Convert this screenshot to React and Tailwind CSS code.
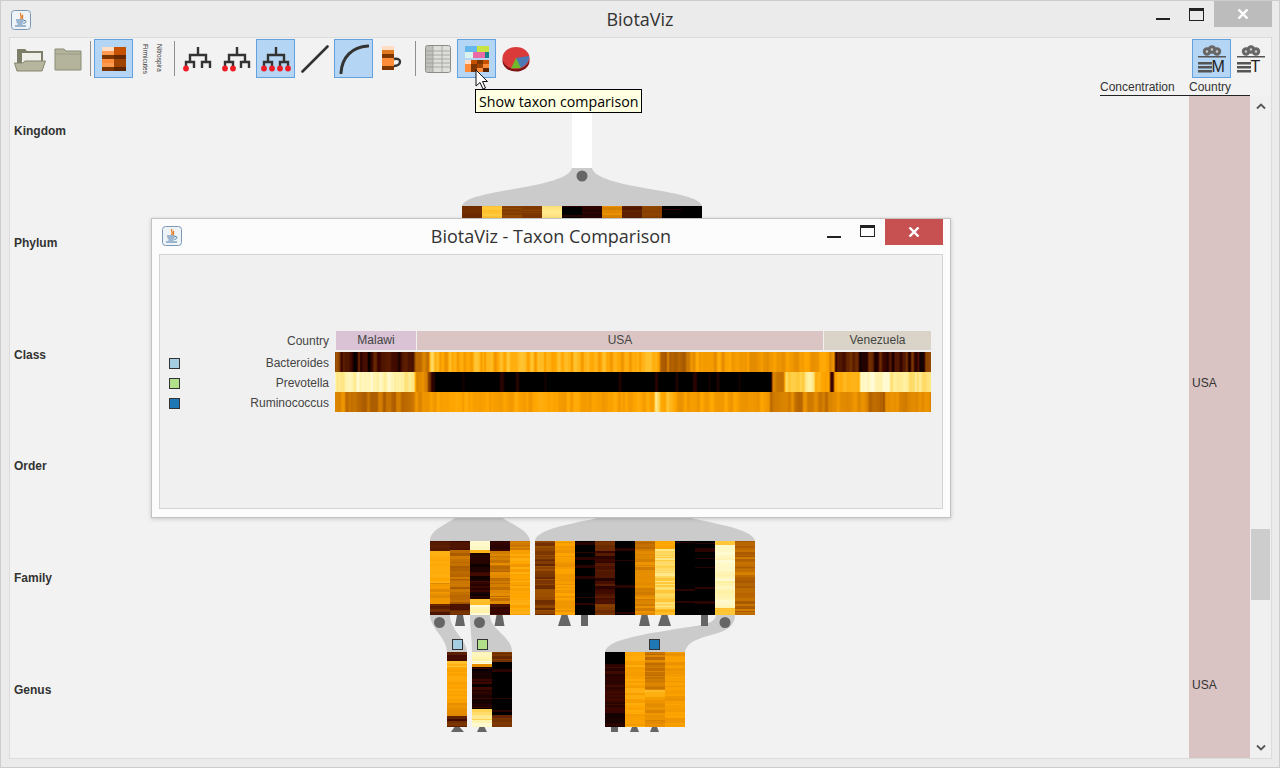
import React from 'react';

const STOPS = [
  [0, [0, 0, 0]],
  [0.1, [58, 5, 0]],
  [0.25, [122, 53, 0]],
  [0.4, [176, 96, 0]],
  [0.5, [226, 138, 0]],
  [0.6, [255, 165, 0]],
  [0.75, [255, 204, 64]],
  [0.9, [255, 240, 160]],
  [1, [255, 253, 224]],
];

function heat(v) {
  const t = Math.max(0, Math.min(1, v));
  for (let i = 1; i < STOPS.length; i++) {
    if (t <= STOPS[i][0]) {
      const [a, ca] = STOPS[i - 1];
      const [b, cb] = STOPS[i];
      const k = (t - a) / (b - a);
      return `rgb(${ca.map((c, n) => Math.round(c + (cb[n] - c) * k)).join(',')})`;
    }
  }
  return 'rgb(255,253,224)';
}

function rng(seed) {
  let s = seed;
  return () => {
    s = (s * 16807) % 2147483647;
    return (s - 1) / 2147483646;
  };
}

// black areas stay black with a dark red line now and then
function level(seg, r) {
  if (seg[1] <= 0.03) return r() < 0.1 ? 0.07 : 0;
  return seg[1] + (r() - 0.5) * seg[2] * 2;
}

// one heatmap column: horizontal stripes, segs are [end fraction, level, jitter]
function Column({ x, y, w, h, segs, seed }) {
  const r = rng(seed);
  const rects = [];
  let py = 0;
  while (py < h) {
    const f = py / h;
    const found = segs.find((s) => f < s[0]) || segs[segs.length - 1];
    const seg = [found[0], found[1], found[2] ?? 0.03];
    const rh = Math.min(1 + Math.floor(r() * 3), h - py);
    rects.push(<rect key={py} x={x} y={y + py} width={w} height={rh} fill={heat(level(seg, r))} />);
    py += rh;
  }
  return <g>{rects}</g>;
}

const TOP_COLS = [0.22, 0.72, 0.3, 0.28, 0.85, 0.02, 0.06, 0.5, 0.17, 0.3, 0.02, 0];

const FAMILY_A = [
  [[0.12, 0.15], [0.2, 0.68, 0.1], [0.55, 0.62, 0.02], [0.85, 0.52, 0.05], [1, 0.2, 0.06]],
  [[0.12, 0.13], [0.7, 0.43, 0.05], [0.85, 0.38, 0.06], [1, 0.18, 0.08]],
  [[0.12, 0.95, 0.04], [0.16, 0.6, 0.1], [0.75, 0.07, 0.05], [0.85, 0.75, 0.07], [1, 0.95, 0.04]],
  [[0.12, 0.08], [0.85, 0.46, 0.06], [1, 0.1, 0.05]],
  [[0.1, 0.47], [1, 0.6, 0.05]],
];
const FAMILY_B = [
  [[1, 0.28, 0.08]],
  [[1, 0.56, 0.04]],
  [[1, 0, 0]],
  [[0.1, 0.22], [0.85, 0.12, 0.06], [1, 0.25, 0.04]],
  [[1, 0.02, 0]],
  [[0.1, 0.42], [1, 0.5, 0.04]],
  [[0.1, 0.62], [0.9, 0.8, 0.08], [1, 0.66]],
  [[1, 0, 0]],
  [[1, 0, 0]],
  [[0.05, 0.72], [0.7, 0.94, 0.05], [0.9, 0.95, 0.04], [1, 0.72]],
  [[1, 0.42, 0.06]],
];

const GENUS = [
  { x: 447, segs: [[0.12, 0.15, 0.05], [0.2, 0.68, 0.1], [0.65, 0.6, 0.02], [0.85, 0.52, 0.04], [1, 0.18, 0.07]] },
  { x: 472, segs: [[0.15, 0.95, 0.05], [0.18, 0.5], [0.75, 0.06, 0.05], [0.9, 0.8, 0.08], [1, 0.95, 0.04]] },
  { x: 492, segs: [[0.12, 0.25, 0.05], [0.82, 0, 0], [1, 0.25, 0.05]] },
  { x: 605, segs: [[0.13, 0, 0], [0.8, 0.09, 0.03], [1, 0.05, 0.03]] },
  { x: 625, segs: [[1, 0.6, 0.04]] },
  { x: 645, segs: [[0.5, 0.47, 0.05], [0.6, 0.68, 0.06], [1, 0.52, 0.05]] },
  { x: 665, segs: [[1, 0.56, 0.04]] },
];

const Dot = ({ x, y }) => <circle cx={x} cy={y} r={5.5} fill="#666666" />;
const Tri = ({ x, y, w = 13, h = 11 }) => (
  <polygon points={`${x - w / 2},${y + h} ${x + w / 2},${y + h} ${x + 3},${y} ${x - 3},${y}`} fill="#666666" />
);
const Bar = ({ x, y, h = 11 }) => <rect x={x} y={y} width={7} height={h} fill="#666666" />;
const Mark = ({ x, y, fill }) => <rect x={x + 0.5} y={y + 0.5} width={10} height={10} fill={fill} stroke="#333333" />;

function TreeCanvas() {
  return (
    <svg className="absolute top-0 left-0" width="1180" height="679" viewBox="10 80 1180 679">
      <rect x="572" y="96" width="20" height="73" fill="#ffffff" />
      <path d="M572 168 L592 168 C594 178 620 184 650 189 C680 194 700 198 702 206 L462 206 C464 198 484 194 514 189 C544 184 570 178 572 168 Z" fill="#cbcbcb" />
      <Dot x={582} y={176} />
      {TOP_COLS.map((v, i) => (
        <Column key={i} x={462 + i * 20} y={206} w={20} h={14} segs={[[1, v, 0.03]]} seed={300 + i * 7} />
      ))}

      <path d="M430 541 C430 530 445 525 460 515 L498 515 C512 525 529 530 530 541 Z" fill="#cbcbcb" />
      <path d="M535 541 C537 526 590 522 607 515 L680 515 C700 522 753 527 755 541 Z" fill="#cbcbcb" />
      {FAMILY_A.map((segs, i) => (
        <Column key={i} x={430 + i * 20} y={541} w={20} h={74} segs={segs} seed={41 + i * 13} />
      ))}
      {FAMILY_B.map((segs, i) => (
        <Column key={i} x={535 + i * 20} y={541} w={20} h={74} segs={segs} seed={97 + i * 17} />
      ))}

      <path d="M430 615 C430 628 447 638 447 652 L467 652 C467 640 450 630 450 615 Z" fill="#cbcbcb" />
      <path d="M470 615 C470 628 472 640 472 652 L512 652 C512 636 490 630 490 615 Z" fill="#cbcbcb" />
      <path d="M605 652 C607 640 640 635 670 630 C700 625 715 625 716 615 L735 615 C735 625 728 630 718 633 C705 637 687 640 685 652 Z" fill="#cbcbcb" />

      <Dot x={439.5} y={622.5} />
      <Tri x={460} y={615} w={10} />
      <Dot x={479.5} y={622.5} />
      <Tri x={499.5} y={615} w={10} />
      <Tri x={564.5} y={615} />
      <Bar x={581} y={615} />
      <Tri x={644.5} y={615} w={11} />
      <Tri x={664.5} y={615} />
      <Bar x={701} y={615} />
      <Dot x={725} y={622.5} />

      <Mark x={452} y={639} fill="#a6cee3" />
      <Mark x={477} y={639} fill="#b2df8a" />
      <Mark x={649} y={639} fill="#1f78b4" />

      {GENUS.map((c, i) => (
        <Column key={i} x={c.x} y={652} w={20} h={75} segs={c.segs} seed={211 + i * 19} />
      ))}

      <polygon points="451,732 464,732 459.5,727 454.5,727" fill="#666666" />
      <polygon points="477,732 487,732 484.5,727 479.5,727" fill="#666666" />
      <rect x="611" y="727" width="7" height="5" fill="#666666" />
      <polygon points="630,732 639,732 637,727 632,727" fill="#666666" />
      <polygon points="650,732 659,732 657,727 652,727" fill="#666666" />
    </svg>
  );
}

// vertical stripes of the comparison view: segs are [end x, level, jitter]
function StripeRow({ y, segs, seed }) {
  const r = rng(seed);
  const values = [];
  let x = 335;
  while (x < 931) {
    const seg = segs.find((s) => x < s[0]) || segs[segs.length - 1];
    const w = Math.min(1 + Math.floor(r() * 4), Math.max(seg[0] - x, 1));
    const v = level(seg, r);
    for (let i = 0; i < w; i++) values.push(v);
    x += w;
  }
  // light smoothing, the original was scaled down from a wider image
  return (
    <g>
      {values.map((v, i) => {
        const prev = values[i - 1] ?? v;
        const next = values[i + 1] ?? v;
        return <rect key={i} x={335 + i} y={y} width={1.4} height={20} fill={heat((prev + v * 2 + next) / 4)} />;
      })}
    </g>
  );
}

const BACTEROIDES = [
  [340, 0.32, 0.05], [415, 0.11, 0.14], [430, 0.47, 0.05], [434, 0.8, 0.05], [660, 0.63, 0.1],
  [690, 0.42, 0.08], [780, 0.56, 0.08], [835, 0.55, 0.08], [925, 0.13, 0.13], [931, 0.3, 0.05],
];
const PREVOTELLA = [
  [415, 0.9, 0.09], [428, 0.5, 0.05], [431, 0.28, 0.1], [772, 0.02, 0], [785, 0.48, 0.05],
  [815, 0.82, 0.1], [830, 0.6, 0.06], [834, 0.08, 0.05], [860, 0.64, 0.06], [890, 0.96, 0.04], [931, 0.85, 0.07],
];
const RUMINOCOCCUS = [
  [345, 0.5, 0.05], [415, 0.43, 0.05], [430, 0.52, 0.05], [655, 0.59, 0.05], [660, 0.88, 0.1],
  [672, 0.66, 0.12], [770, 0.57, 0.05], [830, 0.47, 0.06], [868, 0.52, 0.04], [885, 0.4, 0.05], [931, 0.5, 0.04],
];

function ComparisonStrip() {
  return (
    <svg className="absolute top-0 left-0" width="596" height="60" viewBox="335 352 596 60">
      <StripeRow y={352} segs={BACTEROIDES} seed={1234} />
      <StripeRow y={372} segs={PREVOTELLA} seed={5678} />
      <StripeRow y={392} segs={RUMINOCOCCUS} seed={9012} />
    </svg>
  );
}

function JavaIcon() {
  return (
    <svg width="20" height="20" viewBox="0 0 20 20">
      <rect x="0.5" y="0.5" width="19" height="19" rx="3" fill="#eef3f8" stroke="#7b98b5" />
      <path d="M10 3 C8 5 12 6 9.5 9 M12 5 C10.5 6.5 12.5 7 11 9" stroke="#e8791c" strokeWidth="1.3" fill="none" />
      <path d="M5 10 H13 M5.5 12 H12.5 M6.5 14 H11.5" stroke="#4b7aa6" strokeWidth="1.1" />
      <path d="M13 10.5 C16 10 15.5 13 12.5 13.5 M4 16 H15" stroke="#4b7aa6" strokeWidth="1" fill="none" />
    </svg>
  );
}

function CloseX() {
  return (
    <svg width="12" height="10" viewBox="0 0 12 10">
      <path d="M1.5 0.5 L10.5 9.5 M10.5 0.5 L1.5 9.5" stroke="#ffffff" strokeWidth="2.4" />
    </svg>
  );
}

const Sep = ({ className = 'mr-[3px]' }) => <div className={`w-px h-[35px] bg-[#8f8f8f] ml-[3px] mt-[2px] shrink-0 ${className}`} />;

const ToolBtn = ({ active, children }) => (
  <div className={`w-[39px] h-[39px] flex items-center justify-center shrink-0 border ${active ? 'bg-[#b5d5f4] border-[#63a0e0]' : 'border-transparent'}`}>
    {children}
  </div>
);

function FolderOpen() {
  return (
    <svg width="32" height="26" viewBox="0 0 32 26">
      <path d="M3 3 H11 L13 5 H29 V20 H3 Z" fill="#7d7d68" />
      <rect x="8" y="7" width="19" height="12" fill="#f0f0ea" />
      <path d="M0.5 17 H9 L11 15 H31.5 L28 25 H3 Z" fill="#b6b69e" stroke="#85856f" />
    </svg>
  );
}

function FolderClosed() {
  return (
    <svg width="28" height="24" viewBox="0 0 28 24">
      <path d="M1 2 H10 L12 4 H27 V23 H1 Z" fill="#b4b49c" stroke="#8c8c78" />
      <path d="M1 7 H27" stroke="#9a9a84" />
    </svg>
  );
}

function HeatIcon() {
  return (
    <svg width="24" height="24" viewBox="0 0 24 24">
      {[['#ffdcc4', '#c45000'], ['#ff9a50', '#c45000'], ['#7d3500', '#662800'], ['#ff8c38', '#9e4400'], ['#ff9a50', '#9e4400'], ['#7d3500', '#5e2600']].map((c, i) => (
        <g key={i}>
          <rect x="0" y={i * 4} width="12" height="4" fill={c[0]} />
          <rect x="12" y={i * 4} width="12" height="4" fill={c[1]} />
        </g>
      ))}
    </svg>
  );
}

function TreeIcon({ dots }) {
  return (
    <svg width="30" height="26" viewBox="0 0 30 26">
      <path d="M15 1 V9 M7 16 V9 H23 V16 M3 22 V16 H11 V22 M19 22 V16 H27 V22" fill="none" stroke="#333333" strokeWidth="2.4" />
      {dots.map((x) => (
        <circle key={x} cx={x} cy="22.5" r="2.9" fill="#ee1c25" />
      ))}
    </svg>
  );
}

function TableIcon() {
  return (
    <svg width="26" height="28" viewBox="0 0 26 28">
      <rect x="0.5" y="0.5" width="25" height="27" rx="2" fill="#dededa" stroke="#8d8d88" />
      <path d="M8 1 V27 M17 1 V27 M1 6 H25 M1 10 H25 M1 14 H25 M1 18 H25 M1 22 H25" stroke="#a8a8a4" />
      <rect x="1" y="1" width="7" height="26" fill="#9a9a94" opacity="0.45" />
    </svg>
  );
}

function CompareIcon() {
  const low = ['#ffdcc4', '#c45000', '#7d3500', '#c45000', '#ff8c38', '#7d3500', '#9e4400', '#ff8c38', '#ff8c38', '#7d3500', '#ff8c38', '#5e2600'];
  return (
    <svg width="24" height="26" viewBox="0 0 24 26">
      <rect x="0" y="0" width="12" height="6" fill="#65b7ec" />
      <rect x="12" y="0" width="12" height="6" fill="#c7e33f" />
      <rect x="0" y="6" width="8" height="6" fill="#d8f4ec" />
      <rect x="8" y="6" width="12" height="6" fill="#e96aa6" />
      <rect x="20" y="6" width="4" height="6" fill="#17808a" />
      {low.map((c, i) => (
        <rect key={i} x={(i % 4) * 6} y={14 + Math.floor(i / 4) * 4} width="6" height="4" fill={c} />
      ))}
    </svg>
  );
}

function PieIcon() {
  return (
    <svg width="28" height="27" viewBox="0 0 28 27">
      <ellipse cx="14" cy="16" rx="13.5" ry="10.5" fill="#7e1414" />
      <ellipse cx="14" cy="13" rx="13.5" ry="11" fill="#db3a3a" />
      <path d="M14 13 L27 11 C28 17 22 22 17 23.5 Z" fill="#4d79b5" />
      <path d="M14 13 L19 23 L9 23.5 Z" fill="#6dbb2c" />
    </svg>
  );
}

function CurveIcon() {
  return (
    <svg width="30" height="30" viewBox="0 0 30 30">
      <path d="M2 29 C3 13 13 3 29 2" fill="none" stroke="#333333" strokeWidth="3" strokeLinecap="round" />
    </svg>
  );
}

function LoopIcon() {
  return (
    <svg width="22" height="26" viewBox="0 0 22 26">
      {['#ffdcc4', '#e07820', '#7d3500', '#ff8c38', '#ff8c38', '#7d3500'].map((c, i) => (
        <rect key={i} x="0" y={i * 4} width="12" height="4" fill={c} />
      ))}
      <path d="M12 13 C20 11 20 20 12 20" fill="none" stroke="#333333" strokeWidth="2.4" />
    </svg>
  );
}

function ArcGlyph({ letter }) {
  return (
    <div className="relative w-[30px] h-[30px]">
      <svg className="absolute top-0 left-0" width="30" height="30" viewBox="0 0 30 30">
        {[[10, 7.5], [15, 5.5], [20, 7.5]].map(([cx, cy]) => (
          <g key={cx}>
            <circle cx={cx} cy={cy} r="4.2" fill="#666666" />
            <circle cx={cx} cy={cy} r="1.3" fill="#c8c8c8" />
          </g>
        ))}
        <rect x="1" y="12" width="28" height="1.5" fill="#555555" />
        <rect x="1" y="18" width="14" height="2.5" fill="#555555" />
        <rect x="1" y="22" width="14" height="2.5" fill="#555555" />
        <rect x="1" y="26" width="14" height="2.5" fill="#555555" />
      </svg>
      <span className="absolute left-[15px] top-[15px] text-[16px] leading-[16px] text-[#222222]">{letter}</span>
    </div>
  );
}

function Chevron({ down }) {
  return (
    <svg width="10" height="7" viewBox="0 0 10 7">
      <path d={down ? 'M1 1.5 L5 5.5 L9 1.5' : 'M1 5.5 L5 1.5 L9 5.5'} fill="none" stroke="#555555" strokeWidth="1.8" />
    </svg>
  );
}

function Toolbar() {
  return (
    <div className="h-[42px] pt-[1px] pr-[1px] flex items-start shrink-0">
      <div className="w-[39px] h-[39px] flex items-center justify-center"><FolderOpen /></div>
      <div className="w-[38px] h-[39px] flex items-center justify-center"><FolderClosed /></div>
      <Sep />
      <ToolBtn active><HeatIcon /></ToolBtn>
      <div className="w-[38px] h-[39px] flex items-start gap-[7px] pt-[5px] pl-[9px] text-[6.5px] leading-[7px] text-[#333333]">
        <span className="[writing-mode:vertical-rl]">Firmicutes</span>
        <span className="[writing-mode:vertical-rl]">Nitrospira</span>
      </div>
      <Sep />
      <ToolBtn><TreeIcon dots={[3]} /></ToolBtn>
      <ToolBtn><TreeIcon dots={[3, 11]} /></ToolBtn>
      <ToolBtn active><TreeIcon dots={[3, 11, 19, 27]} /></ToolBtn>
      <ToolBtn>
        <svg width="28" height="28" viewBox="0 0 28 28"><path d="M1.5 26.5 L26.5 1.5" stroke="#333333" strokeWidth="2.6" strokeLinecap="round" /></svg>
      </ToolBtn>
      <ToolBtn active><CurveIcon /></ToolBtn>
      <ToolBtn><LoopIcon /></ToolBtn>
      <Sep className="mr-[2px]" />
      <ToolBtn><TableIcon /></ToolBtn>
      <ToolBtn active><CompareIcon /></ToolBtn>
      <ToolBtn><PieIcon /></ToolBtn>
      <div className="flex-1" />
      <ToolBtn active><ArcGlyph letter="M" /></ToolBtn>
      <ToolBtn><ArcGlyph letter="T" /></ToolBtn>
    </div>
  );
}

function LevelLabels() {
  return (
    <div className="flex flex-col gap-[97.8px] pt-[44px] pl-[4px] font-bold text-[12px] leading-[14px] text-[#333333]">
      {['Kingdom', 'Phylum', 'Class', 'Order', 'Family', 'Genus'].map((l) => (
        <div key={l}>{l}</div>
      ))}
    </div>
  );
}

function RightPanel() {
  return (
    <div className="absolute top-0 right-0 bottom-0 w-[171px] flex flex-col text-[12px] text-[#333333]">
      <div className="h-[16px] w-[150px] border-b border-[#222222] flex leading-[14px]">
        <span className="w-[89px]">Concentration</span>
        <span>Country</span>
      </div>
      <div className="flex flex-1 min-h-0">
        <div className="w-[89px]" />
        <div className="w-[61px] bg-[#d9c3c3] pl-[3px] pt-[280px] flex flex-col gap-[288px] leading-[14px]">
          <span>USA</span>
          <span>USA</span>
        </div>
        <div className="w-[21px] pl-[1px] pr-px flex flex-col items-center bg-[#f0f0f0]">
          <div className="h-[20px] flex items-center"><Chevron /></div>
          <div className="h-[413px] shrink-0" />
          <div className="h-[71px] w-full bg-[#cdcdcd] shrink-0" />
          <div className="flex-1" />
          <div className="h-[22px] flex items-center"><Chevron down /></div>
        </div>
      </div>
    </div>
  );
}

function ComparisonWindow() {
  return (
    <div className="absolute left-[150px] top-[217px] w-[800px] h-[300px] bg-[#fcfcfc] border border-[#c2c2c2] shadow-[0_1px_4px_rgba(0,0,0,0.18)] flex flex-col px-[7px] pb-[8px]">
      <div className="h-[35px] flex items-start relative shrink-0">
        <div className="mt-[7px] ml-[3px]"><JavaIcon /></div>
        <div className="absolute inset-x-0 top-[5px] text-center text-[18px] leading-[24px] text-[#333333] font-['Open_Sans',sans-serif]">BiotaViz - Taxon Comparison</div>
        <div className="ml-auto flex items-start relative">
          <div className="w-[14px] h-[2px] bg-[#222222] mt-[17px] mr-[19px]" />
          <div className="w-[15px] h-[12px] border border-[#222222] border-t-[3px] mt-[6px] mr-[10px]" />
          <div className="w-[58px] h-[26px] bg-[#c75050] flex items-center justify-center"><CloseX /></div>
        </div>
      </div>
      <div className="flex-1 bg-[#f0f0f0] border border-[#d3d3d3] pt-[76px] text-[12px] text-[#444444] leading-[20px]">
        <div className="flex h-[20px]">
          <div className="w-[169px] text-right">Country</div>
          <div className="w-[7px]" />
          <div className="flex flex-1 pr-[11px] gap-px h-[19px] text-center leading-[19px]">
            <div className="w-[80px] bg-[#d9c3d5]">Malawi</div>
            <div className="w-[406px] bg-[#dac4c4]">USA</div>
            <div className="flex-1 bg-[#d9d4c7]">Venezuela</div>
          </div>
        </div>
        <div className="flex h-[60px] mt-px">
          <div className="w-[169px] flex flex-col pt-px">
            {[['Bacteroides', 'bg-[#a6cee3]'], ['Prevotella', 'bg-[#b2df8a]'], ['Ruminococcus', 'bg-[#1f78b4]']].map(([name, color]) => (
              <div key={name} className="h-[20px] shrink-0 flex items-center justify-between pl-[9px]">
                <div className={`w-[11px] h-[11px] border border-[#333333] ${color}`} />
                <span>{name}</span>
              </div>
            ))}
          </div>
          <div className="w-[6px]" />
          <div className="relative flex-1"><ComparisonStrip /></div>
        </div>
      </div>
    </div>
  );
}

export default function App() {
  return (
    <div className="relative w-[1280px] h-[768px] overflow-hidden bg-[#ebebeb] border border-[#cdcdcd] flex flex-col font-['Liberation_Sans',sans-serif]">
      <div className="h-[36px] shrink-0 flex items-start relative">
        <div className="mt-[9px] ml-[10px]"><JavaIcon /></div>
        <div className="absolute inset-x-0 top-[6px] text-center text-[18px] leading-[24px] text-[#333333] font-['Open_Sans',sans-serif]">BiotaViz</div>
        <div className="ml-auto mr-[7px] flex items-start">
          <div className="w-[14px] h-[2px] bg-[#222222] mt-[17px] mr-[19px]" />
          <div className="w-[15px] h-[13px] border border-[#222222] border-t-[3px] mt-[7px] mr-[10px]" />
          <div className="w-[58px] h-[26px] bg-[#bcbcbc] flex items-center justify-center"><CloseX /></div>
        </div>
      </div>

      <div className="ml-[8px] mr-[7px] mb-[8px] flex-1 min-h-0 bg-[#f2f2f2] border border-[#dcdcdc] flex flex-col">
        <Toolbar />
        <div className="relative flex-1 min-h-0">
          <TreeCanvas />
          <LevelLabels />
          <RightPanel />
        </div>
      </div>

      <ComparisonWindow />

      <svg className="absolute left-[474px] top-[68px]" width="14" height="22" viewBox="0 0 14 22">
        <path d="M1 1 V17 L5 13.5 L8 20 L10.5 19 L7.5 12.5 L12.5 12.5 Z" fill="#ffffff" stroke="#111111" />
      </svg>
      <div className="absolute left-[474px] top-[88px] w-[167px] h-[24px] bg-[#ffffe1] border border-black text-[14.2px] leading-[23px] pl-[3px] text-black whitespace-nowrap font-['Open_Sans',sans-serif]">
        Show taxon comparison
      </div>
    </div>
  );
}
